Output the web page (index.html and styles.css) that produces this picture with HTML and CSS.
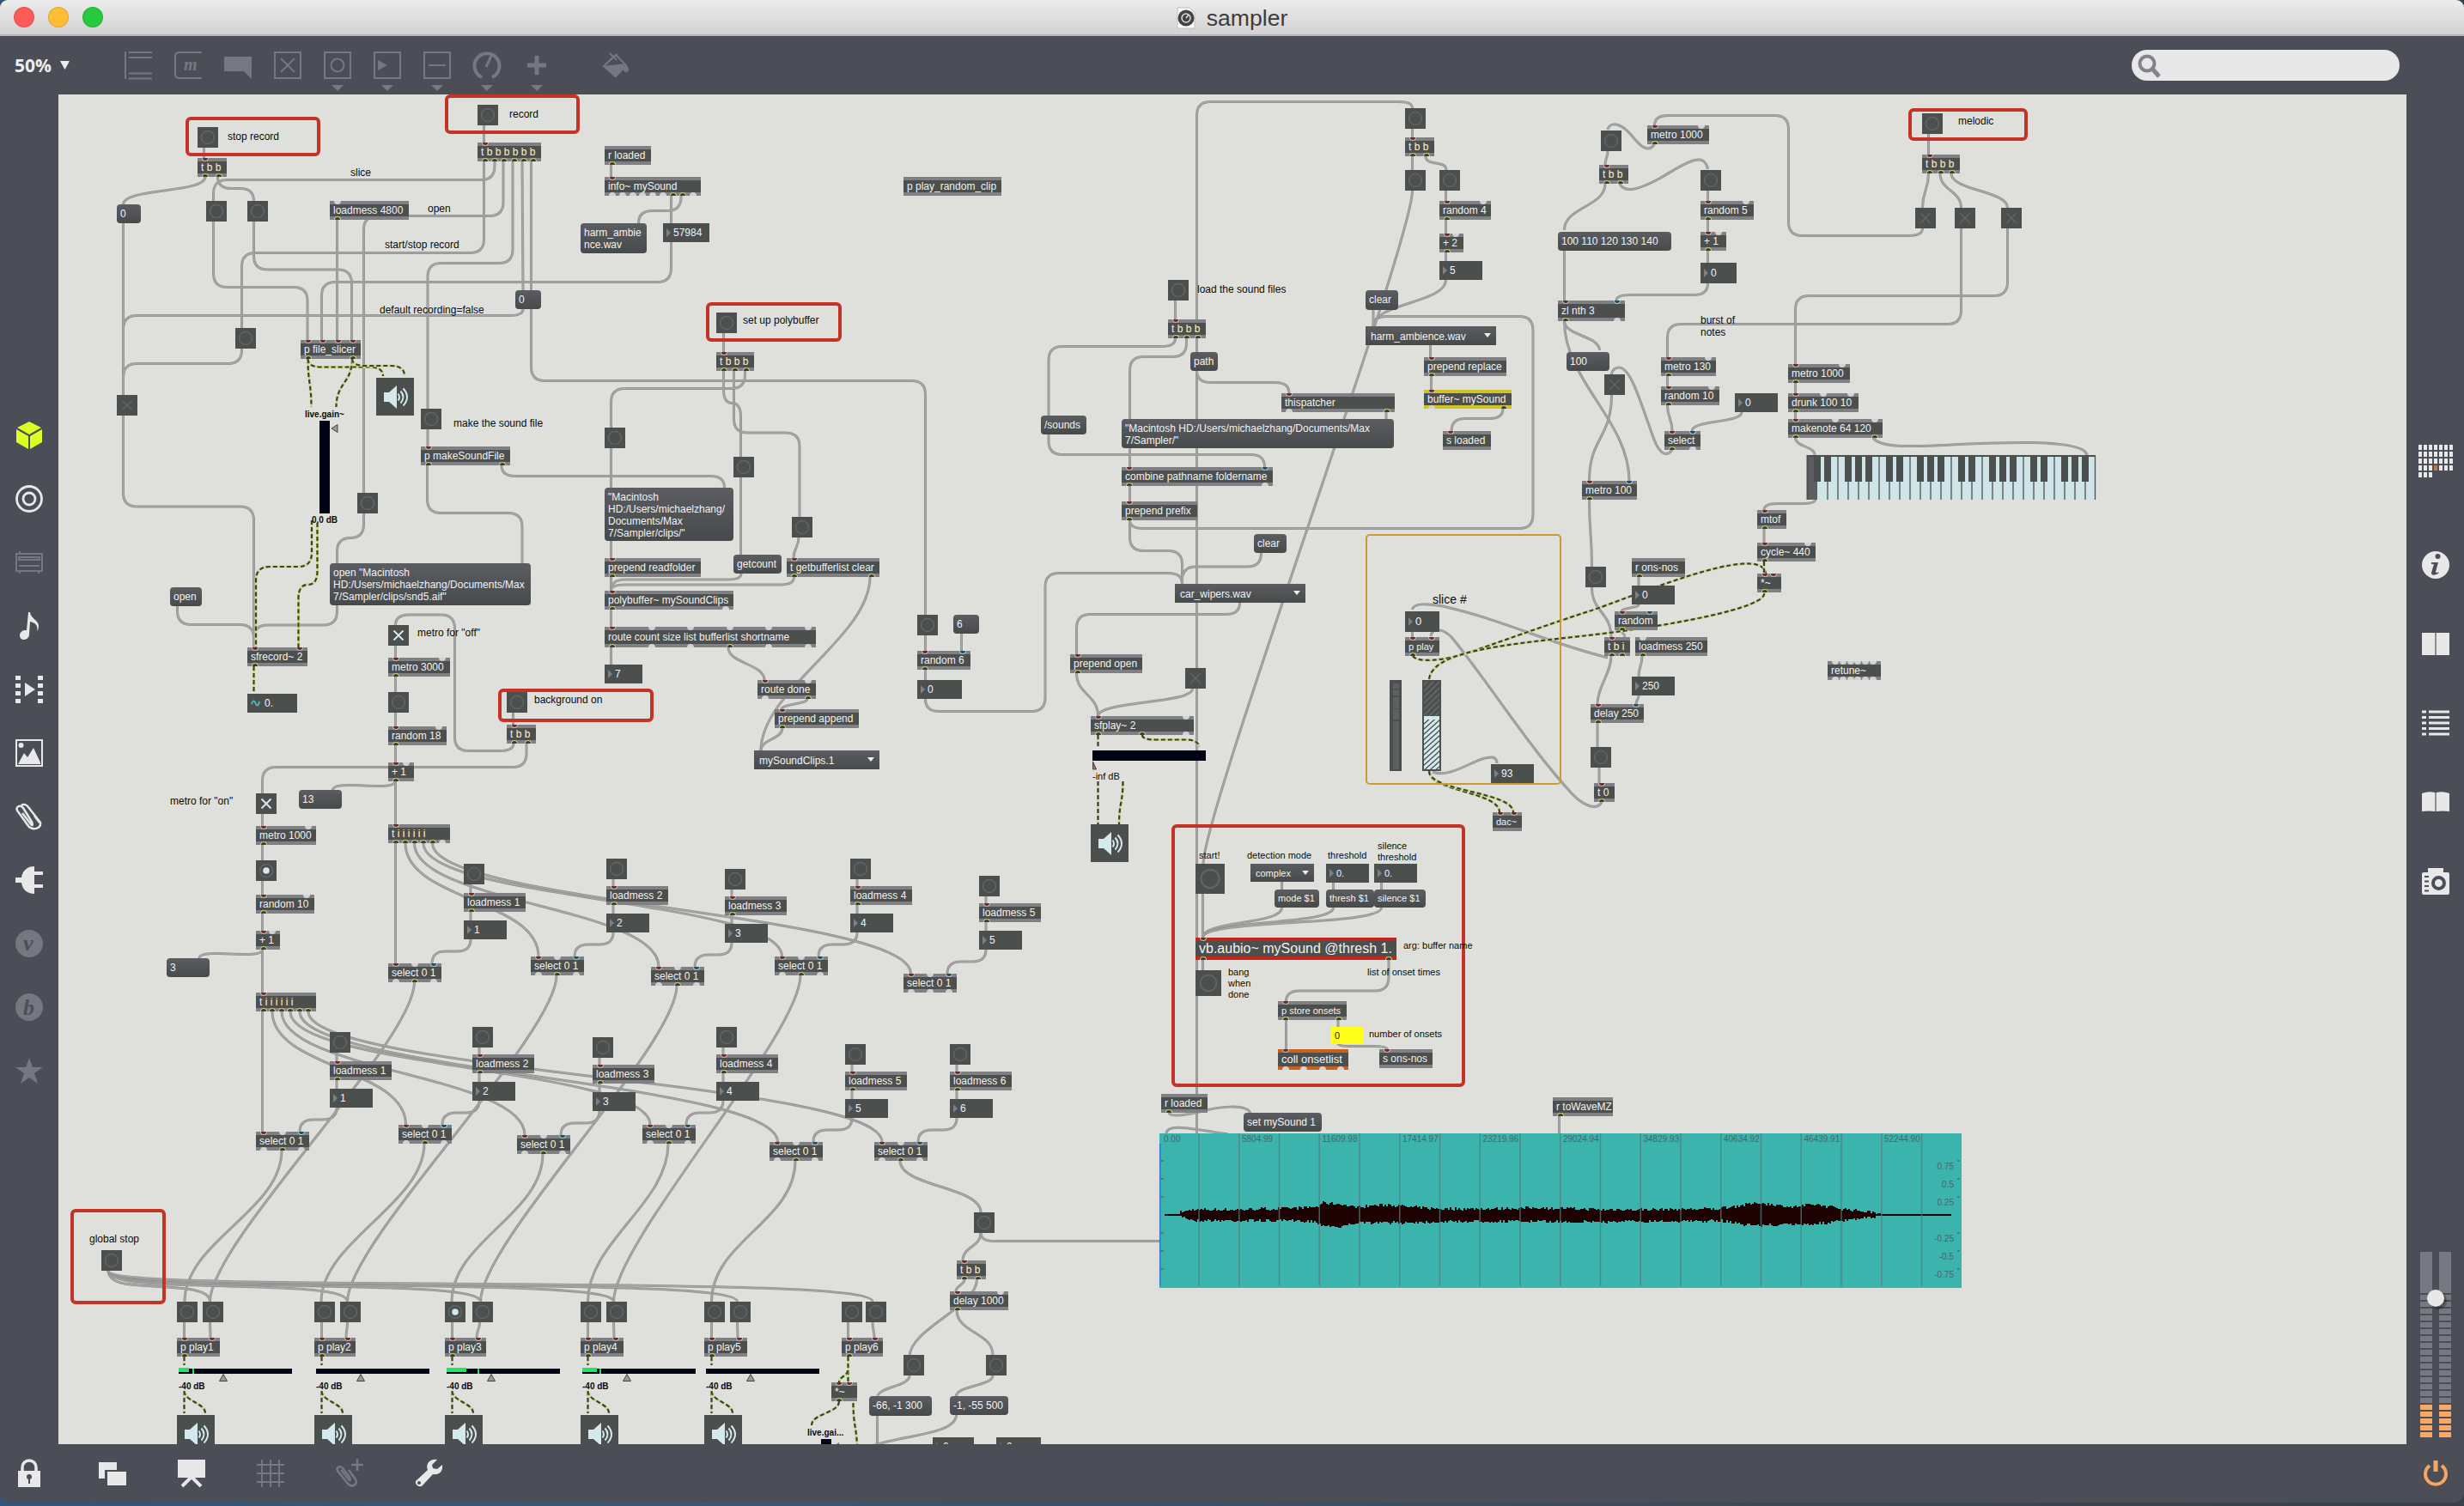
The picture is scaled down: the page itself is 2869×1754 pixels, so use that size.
FILE: index.html
```html
<!DOCTYPE html>
<html lang="en">
<head>
<meta charset="utf-8">
<title>sampler</title>
<link rel="stylesheet" href="styles.css">
</head>
<body>
<div class="window">
  <header class="titlebar">
    <div class="lights"><i class="close"></i><i class="min"></i><i class="max"></i></div>
    <div class="title">
      <svg width="22" height="26" viewBox="0 0 22 26"><path d="M1 1h14l6 6v18H1z" fill="#fff" stroke="#bbb"/><circle cx="11" cy="13" r="9.500" fill="#444"/><circle cx="11" cy="13" r="5" fill="none" stroke="#ddd" stroke-width="1.500"/><path d="M11 13l3-4" stroke="#ddd" stroke-width="1.500"/></svg>
      <span>sampler</span>
    </div>
  </header>

  <div class="toolbar">
    <div class="zoom"><span>50%</span><svg width="11" height="10"><path d="M0 0h11L5.500 10z" fill="#ececec"/></svg></div>
    <svg class="tools" width="600" height="56" viewBox="140 54 600 56" fill="none" stroke="#757881" stroke-width="2">
      <path d="M146 60v32M150 61h27M150 67h27M150 85.500h27M150 91.500h27"/>
      <path d="M235 61h-26q-5 0-5 5v20q0 5 5 5h26"/>
      <text x="214" y="82" class="glyph">m</text>
      <path d="M261 66h32v26l-9-9h-23z" fill="#757881" stroke="none"/>
      <path d="M320 61h30v30h-30zM327 68l16 16M343 68l-16 16"/>
      <path d="M378 61h30v30h-30z"/><circle cx="393" cy="76" r="7.500"/>
      <path d="M436 61h30v30h-30z"/><path d="M440 70l11 6-11 6z" fill="#757881" stroke="none"/>
      <path d="M494 61h30v30h-30zM499 76h20"/>
      <path d="M561 90A14.500 14.500 0 1 1 573 90" stroke-width="4"/><path d="M566 78l6-13" stroke-width="3"/>
      <path d="M625 65v22M614 76h22" stroke-width="5"/>
      <path d="M386 99h14l-7 7zM444 99h14l-7 7zM502 99h14l-7 7zM560 99h14l-7 7zM618 99h14l-7 7z" fill="#757881" stroke="none"/>
      <path d="M703 77l14-13 12 12-12 13z"/><path d="M702 77l27-3-13 16z" fill="#757881" stroke="none"/><path d="M710 62l8 8M719 63l-9 7"/><path d="M729 75q-3 4-3 6 0 3 3 3t3-3q0-2-3-6z" fill="#757881" stroke="none"/>
    </svg>
    <div class="search"><svg width="28" height="30" viewBox="0 0 28 30" fill="none" stroke="#81848c" stroke-width="4"><circle cx="11" cy="11" r="8.500"/><path d="M17 17l8 9" stroke-width="5"/></svg></div>
  </div>

  <div class="middle">
    <nav class="side left">
      <svg viewBox="0 0 32 32"><path d="M16 0l14 7-14 8L2 7zM1 9l14 8v15L1 24zM31 9l-14 8v15l14-8z" fill="#dcff24"/></svg>
      <svg viewBox="0 0 32 32" fill="none" stroke="#e8e8e8" stroke-width="2.800"><circle cx="16" cy="16" r="14.500"/><circle cx="16" cy="16" r="7"/></svg>
      <svg viewBox="0 0 32 32" fill="none" stroke="#757881" stroke-width="2"><path d="M1 6h30v20H1zM4 10h24v3H4zM4 20h24M5 29v-3M27 29v-3M5 6V3"/></svg>
      <svg viewBox="0 0 32 32"><path d="M15 0h2c1 8 10 9 10 16 0 3-1 5-2 6 2-7-3-10-8-11l-1 15c0 3-3 6-6 6s-5-2-5-5 3-6 6-6h2z" fill="#e8e8e8"/></svg>
      <svg viewBox="0 0 32 32"><path d="M0 0h6v5H0zM0 9h6v5H0zM0 18h6v5H0zM0 27h6v5H0zM26 0h6v5h-6zM26 9h6v5h-6zM26 18h6v5h-6zM26 27h6v5h-6zM11 8l12 8-12 8z" fill="#e8e8e8"/></svg>
      <svg viewBox="0 0 32 32"><path d="M1 1h30v30H1z" fill="none" stroke="#e8e8e8" stroke-width="2"/><circle cx="6.500" cy="7" r="3" fill="#e8e8e8"/><path d="M3 29l7-13 4 5 7-11 8 17v2z" fill="#e8e8e8"/></svg>
      <svg viewBox="0 0 32 32" fill="none" stroke="#e8e8e8" stroke-width="2.500"><path d="M8 12l10 13q3 3 1-3L9 6C6 2 0 4 2 9l13 18c5 6 15 3 14-4L15 5C13 2 9 1 7 3M22 15l6 8"/></svg>
      <svg viewBox="0 0 32 32"><path d="M22 0v32C14 32 8 27 7 19H0v-6h7C8 5 14 0 22 0zM22 6h10v4H22zM22 21h10v4H22z" fill="#e8e8e8"/></svg>
      <svg viewBox="0 0 32 32"><circle cx="16" cy="16" r="16" fill="#757881"/><text x="9" y="24" class="serif">v</text></svg>
      <svg viewBox="0 0 32 32"><circle cx="16" cy="16" r="16" fill="#757881"/><text x="9" y="25" class="serif">b</text></svg>
      <svg viewBox="0 0 32 32"><path d="M16 1l4 11h12l-10 7 4 12-10-7-10 7 4-12L0 12h12z" fill="#757881"/></svg>
    </nav>

    <main class="patcher" id="patcher"></main>

    <aside class="side right">
      <div class="calendar" id="calendar"></div>
      <svg viewBox="0 0 32 32"><circle cx="16" cy="16" r="16" fill="#e8e8e8"/><circle cx="18.500" cy="6" r="3" fill="#4b4e57"/><path d="M11 13h8l-3 11q1 2 4 0l-1 2q-8 4-8-1l3-10h-3z" fill="#4b4e57"/></svg>
      <svg viewBox="0 0 32 32"><path d="M0 3h15v26H0zM17 3h15v26H17z" fill="#e8e8e8"/><path d="M16 3v26" stroke="#8b8d93" stroke-width="2"/></svg>
      <svg viewBox="0 0 32 32" stroke="#e8e8e8" stroke-width="3"><path d="M0 3h5M8 3h24M0 9.500h5M8 9.500h24M0 16h5M8 16h24M0 22.500h5M8 22.500h24M0 29h5M8 29h24"/></svg>
      <svg viewBox="0 0 32 32"><path d="M0 6q8-3 15-1v22q-7-1-15 0zM32 6q-8-3-15-1v22q7-1 15 0z" fill="#e8e8e8"/><path d="M16 5v22" stroke="#8b8d93" stroke-width="2"/></svg>
      <svg viewBox="0 0 32 32"><path d="M2 6h5V1h18v5h5q2 0 2 2v22q0 2-2 2H2q-2 0-2-2V8q0-2 2-2z" fill="#e8e8e8"/><circle cx="19.500" cy="18.500" r="6.500" fill="none" stroke="#4b4e57" stroke-width="4"/><path d="M3 11h5M3 16.500h5M3 22h5M3 27.500h5" stroke="#4b4e57" stroke-width="2"/></svg>
      <div class="meters"><div class="meter"></div><div class="meter"></div><i class="knob"></i></div>
    </aside>
  </div>

  <footer class="bottombar">
    <svg class="actions" width="520" height="40" viewBox="0 1696 520 40">
      <path d="M21 1713h26v19H21z" fill="#e8e8e8"/><path d="M26 1714v-5a8 8 0 0 1 16 0v5" fill="none" stroke="#e8e8e8" stroke-width="3.500"/><circle cx="34" cy="1720" r="3" fill="#4b4e57"/><path d="M34 1720v8" stroke="#4b4e57" stroke-width="2"/>
      <path d="M115 1703h21v9h-14v10h-7zM125 1714h22v16h-22z" fill="#e8e8e8"/>
      <path d="M207 1700h32v21h-32z" fill="#e8e8e8"/><path d="M212 1731l11-11 11 11" fill="none" stroke="#e8e8e8" stroke-width="4"/>
      <path d="M305 1700v32M315 1700v32M325 1700v32M299 1706h32M299 1716h32M299 1726h32" stroke="#757881" stroke-width="2"/>
      <path d="M397 1712l9 11q3 3 1-3l-8-10c-3-4-8-1-6 3l12 15c5 5 12 1 9-5l-8-11M416 1699v14M409 1706h14" fill="none" stroke="#757881" stroke-width="2.500"/>
      <path d="M509 1700l-6 6 1 4 5 1 6-5c1 9-5 12-11 11l-12 13c-3 3-9 0-8-5l14-13c-3-7 3-14 11-12z" fill="#e8e8e8"/><circle cx="488" cy="1727" r="2" fill="#4b4e57"/>
    </svg>
    <svg class="power" width="40" height="40" viewBox="-20 -20 40 40" fill="none" stroke="#f7a562" stroke-width="4"><path d="M-7-9A12 12 0 1 0 7-9" /><path d="M0-15V-2" stroke-width="5"/></svg>
  </footer>
</div>
<script src="patch.js"></script>
</body>
</html>
```
FILE: styles.css
```css
* { box-sizing: border-box; }
body { margin: 0; background: linear-gradient(90deg, #31557f, #3c5672 30%, #3a3f48); font-family: "Liberation Sans", Arial, sans-serif; }
.window { width: 2869px; height: 1750px; display: flex; flex-direction: column; background: #4b4e57; border-radius: 9px 9px 12px 12px; overflow: hidden; }

.titlebar { height: 42px; flex: none; display: flex; align-items: center; position: relative; background: linear-gradient(#ececec, #d2d2d2); border-bottom: 2px solid #b4b4b4; }
.lights { display: flex; gap: 16px; padding-left: 16px; }
.lights i { width: 24px; height: 24px; border-radius: 50%; border: 1px solid rgba(0,0,0,.12); }
.close { background: #fc5b57; }
.min { background: #fdbe33; }
.max { background: #27c93f; }
.title { position: absolute; inset: 0; display: flex; align-items: center; justify-content: center; gap: 13px; padding-top: 2px; font-size: 26.600px; color: #3c3c3c; }

.toolbar { height: 68px; flex: none; display: flex; align-items: center; padding-left: 17px; }
.zoom { width: 123px; display: flex; align-items: center; gap: 10px; font: bold 21px "Open Sans", sans-serif; color: #ececec; }
.tools { flex: none; align-self: flex-end; }
.glyph { font: italic bold 20px "Liberation Serif", serif; fill: #757881; stroke: none; }
.search { margin-left: auto; margin-right: 75px; width: 312px; height: 36px; border-radius: 18px; background: #e8e8e8; padding: 5px 0 0 7px; }

.middle { height: 1572px; flex: none; display: flex; }
.side { display: flex; flex-direction: column; align-items: center; flex: none; }
.side > svg { width: 32px; height: 32px; flex: none; }
.left { width: 68px; gap: 42px; padding-top: 381px; }
.right { width: 67px; gap: 60px; padding-top: 408px; }
.serif { font: italic bold 26px "Liberation Serif", serif; fill: #4b4e57; }
.calendar { width: 40px; height: 64px; display: grid; grid-template-columns: repeat(7, 4px); grid-auto-rows: 6px; align-content: start; gap: 2px; }
.calendar i { background: #e8e8e8; }
.calendar i.today { background: #c97830; }
.meters { position: relative; display: flex; gap: 8px; margin-top: 356px; }
.meter { width: 14px; height: 216px; background: linear-gradient(#767982 48px, transparent 48px), repeating-linear-gradient(#4b4e57 0 2px, transparent 2px 8px), linear-gradient(#767982 176px, #f9a866 176px); background-size: 100% 48px, auto, auto; background-repeat: no-repeat, repeat, no-repeat; }
.knob { position: absolute; left: 8px; top: 44px; width: 20px; height: 20px; border-radius: 50%; background: #e8e8e8; box-shadow: 3px 3px 2px rgba(0,0,0,.35); }

.bottombar { height: 68px; flex: none; display: flex; justify-content: space-between; align-items: center; padding-right: 13px; }

.patcher { width: 2734px; position: relative; overflow: hidden; background: #dfe0db; }
.cords { position: absolute; left: -68px; top: -110px; }
.cords path { fill: none; }
.cord-edge { stroke: #919191; stroke-width: 3; }
.cord-core { stroke: #a8a8a7; stroke-width: 1.400; }
.sig-edge { stroke: #ccdb92; stroke-width: 3; }
.sig-core { stroke: #3f412f; stroke-width: 2.200; stroke-dasharray: 5 3; }

.node { position: absolute; font-size: 12px; line-height: 14px; color: #f1f3f4; white-space: pre; }
.object { display: flex; flex-direction: column; justify-content: space-between; background: #4b4f4d; }
.object .label { padding-left: 4px; }
.ports { height: 4px; flex: none; display: flex; justify-content: space-between; padding: 0 5px; background: #7f7f84; }
.ports.solo { justify-content: flex-start; }
.ports i { width: 8px; height: 4px; }
.ins i { border-radius: 0 0 4px 4px; }
.outs i { border-radius: 4px 4px 0 0; }
.ports .idle { background: #d3d3d6; }
.ins .hot { background: #5c3233; border: 1px solid #d6b5ae; border-top: 0; }
.ins .cold { background: #2f4a58; border: 1px solid #9fd0dc; border-top: 0; }
.outs .live { background: #3c3f2c; border: 1px solid #c5cf80; border-bottom: 0; }
.yellow .ports { background: #cfc31f; }
.red .ports { background: #c1251b; }
.orange .ports { background: #c9611c; }
.message { padding: 4px; background: linear-gradient(#5b5d61, #474a4a); border-radius: 4px; }
.number { background: #4b4f4d; display: flex; align-items: center; gap: 3px; padding-left: 4px; }
.number::before { content: ""; border-left: 5px solid #7c7f84; border-top: 5px solid transparent; border-bottom: 5px solid transparent; }
.signalnum { background: #4b4f4d; display: flex; align-items: center; gap: 5px; padding-left: 4px; }
.flag { background: #ffff17; color: #222; padding: 3px 4px; font-size: 11px; }
.menu { background: linear-gradient(#5b5d61, #474a4a); display: flex; align-items: center; justify-content: space-between; padding: 1px 6px 0; }
.menu::after { content: ""; border-top: 5px solid #eee; border-left: 4px solid transparent; border-right: 4px solid transparent; margin-bottom: 2px; }
.bang, .toggle, .speaker { background: #4b4f4d; }
.bang svg, .toggle svg, .speaker svg { display: block; width: 100%; height: 100%; fill: none; stroke: #616567; stroke-width: 1.500; }
.toggle.on svg { stroke: #d3e9ee; stroke-width: 2; }
.lit circle + circle { fill: #d3e9ee; stroke: none; }
.speaker svg { stroke: #d3e9ee; stroke-width: 2; }
.comment { color: #0a0a0a; }
.s10 { font-size: 10px; font-weight: bold; }
.s11 { font-size: 11px; line-height: 13px; }
.s13 { font-size: 13px; }
.s14 { font-size: 14px; }
.s16 { font-size: 16px; line-height: 18px; }
.panel { border: 4px solid #c33427; border-radius: 6px; }
.panel.thin { border: 2px solid #cb9a33; border-radius: 5px; }
.bar { background: #000314; }
.bar i { position: absolute; left: 0; top: -1px; height: 5px; background: #1fe560; }
.bar i + i { width: 2px; top: 0; height: 6px; }
.art { position: absolute; left: -68px; top: -110px; }
.ruler { font-size: 10px; fill: #4b6463; }
```
FILE: patch.js
```javascript
const patcher = document.getElementById('patcher');
const OX = 68, OY = 110;

/* ---- cords ---- */
function rounded(x, y, steps) {
  const pts = [[x, y]];
  steps.forEach((s, i) => {
    const last = pts[pts.length - 1];
    pts.push(i % 2 ? [s, last[1]] : [last[0], s]);
  });
  let d = `M${x} ${y}`;
  for (let i = 1; i < pts.length - 1; i++) {
    const [a, b, c] = [pts[i - 1], pts[i], pts[i + 1]];
    const l1 = Math.hypot(b[0] - a[0], b[1] - a[1]) / (i === 1 ? 1 : 2);
    const l2 = Math.hypot(c[0] - b[0], c[1] - b[1]) / (i === pts.length - 2 ? 1 : 2);
    const r1 = Math.min(16, l1), r2 = Math.min(16, l2);
    const u = [Math.sign(b[0] - a[0]), Math.sign(b[1] - a[1])];
    const v = [Math.sign(c[0] - b[0]), Math.sign(c[1] - b[1])];
    d += `L${b[0] - u[0] * r1} ${b[1] - u[1] * r1}Q${b[0]} ${b[1]} ${b[0] + v[0] * r2} ${b[1] + v[1] * r2}`;
  }
  const e = pts[pts.length - 1];
  return d + `L${e[0]} ${e[1]}`;
}
function curve(x1, y1, x2, y2, k) {
  if (k === undefined) k = Math.min(Math.abs(y2 - y1) / 2, 70);
  return `M${x1} ${y1}C${x1} ${y1 + k} ${x2} ${y2 - k} ${x2} ${y2}`;
}
const cords = [], signals = [];
const R = (x, y, ...s) => cords.push(rounded(x, y, s));
const C = (...a) => cords.push(curve(...a));
const P = d => cords.push(d);
const SR = (x, y, ...s) => signals.push(rounded(x, y, s));
const SC = (...a) => signals.push(curve(...a));
const SP = d => signals.push(d);

/* ---- nodes: kind|x|y|w|h|text|inlets|outlets|classes ---- */
const nodes = [];
const N = s => nodes.push(...s.trim().split('\n'));

N(`
panel|216|136|157|46
panel|518|110|157|46
panel|822|352|158|46
panel|580|802|181|39
panel|82|1408|111|111
panel|2222|126|139|38
panel|1364|960|342|306
panel|1590|622|228|292||||thin
bang|230|148
obj|230|184|34|22|t b b|r|yy
bang|556|122
obj|556|166|74|22|t b b b b b b|r|yyyyyy
msg|136|238|28|22|0
bang|240|234
bang|288|234
obj|384|234|92|22|loadmess 4800|.|y
msg|600|338|30|22|0
bang|274|382
obj|350|396|70|22|p file_slicer|rrrr|yy
speaker|438|440|44|44
bar|372|490|12|108
toggle|136|460
bang|490|476
obj|490|520|104|22|p makeSoundFile|r|yy
bang|416|574
obj|704|170|54|22|r loaded||y
obj|704|206|112|22|info~ mySound|r|......yy.
msg|676|260|77|35|harm_ambie\\nnce.wav
num|772|260|54|22|57984
obj|1052|206|114|22|p play_random_clip
bang|834|364
obj|834|410|44|22|t b b b|r|yyy
bang|704|498
bang|854|532
msg|704|568|150|62|"Macintosh\\nHD:/Users/michaelzhang/\\nDocuments/Max\\n7/Sampler/clips/"
obj|704|650|112|22|prepend readfolder|r|y
msg|854|646|56|22|getcount
obj|916|650|108|22|t getbufferlist clear|r|yy
bang|922|602
obj|704|688|150|22|polybuffer~ mySoundClips|r|y.
obj|704|730|246|24|route count size list bufferlist shortname|r.....|y..y..
num|704|774|44|22|7
bang|590|806
obj|590|844|34|22|t b b|r|yy
obj|882|792|68|22|route done|r.|.y
obj|902|826|98|22|prepend append|r|y
menu|878|874|146|22|mySoundClips.1
bang|1068|716
msg|1110|716|30|22|6
obj|1068|758|62|22|random 6|rb|y
num|1068|792|52|22|0
msg|198|684|37|22|open
msg|384|656|234|49|open "Macintosh\\nHD:/Users/michaelzhang/Documents/Max\\n7/Sampler/clips/snd5.aif"
obj|288|754|70|22|sfrecord~ 2|rr|y
sig|288|808|58|22|0.
toggle|452|728|||||||on
obj|452|766|72|22|metro 3000|r.|y
bang|452|806
obj|452|846|68|22|random 18|r.|y
obj|452|888|30|22|+ 1|r.|y
msg|348|920|50|22|13
toggle|298|924|||||||on
obj|298|962|70|22|metro 1000|r.|y
bang|298|1002|||||||lit
obj|298|1042|68|22|random 10|r.|y
obj|298|1084|28|22|+ 1|r.|y
msg|194|1116|50|22|3
obj|452|960|72|22|t i i i i i i|r|yyyyy.
obj|298|1156|70|22|t i i i i i i|r|yyyyyy
bang|118|1456
bang|1134|1412
obj|1114|1468|34|22|t b b|r|yy
obj|1106|1504|68|22|delay 1000|r.|y
bang|1052|1578
bang|1148|1578
msg|1012|1626|73|23|-66, -1 300
msg|1106|1626|68|22|-1, -55 500
obj|968|1610|30|22|*~|rr|y
num|1086|1674|48|22|0
num|1160|1674|52|22|0
bar|956|1676|12|20
bang|1636|126
obj|1636|160|34|22|t b b|r|yy
bang|1636|198
bang|1676|198
obj|1676|234|60|22|random 4|r.|y
obj|1676|272|28|22|+ 2|r.|y
num|1676|304|50|22|5
bang|1360|326
obj|1360|372|44|22|t b b b|r|yyy
msg|1590|338|38|23|clear
menu|1590|380|152|22|harm_ambience.wav
msg|1386|410|32|22|path
obj|1658|416|96|22|prepend replace|r|y
obj|1492|458|132|20|thispatcher|r|.y
obj|1658|454|102|22|buffer~ mySound|r|.y|yellow
msg|1306|488|317|34|"Macintosh HD:/Users/michaelzhang/Documents/Max\\n7/Sampler/"
msg|1212|484|53|22|/sounds
obj|1680|502|56|22|s loaded|r|
obj|1306|544|176|22|combine pathname foldername|rb|y.
obj|1306|584|88|22|prepend prefix|r|y
msg|1460|622|38|22|clear
bang|1864|152
obj|1918|146|72|22|metro 1000|r.|y
obj|1862|192|34|22|t b b|r|yy
bang|1980|198
obj|1980|234|62|22|random 5|r.|y
obj|1980|270|30|22|+ 1|r.|y
num|1980|306|42|24|0
msg|1814|270|132|22|100 110 120 130 140
obj|1814|350|78|24|zl nth 3|rb|y.
msg|1824|410|50|22|100
toggle|1868|436
obj|1934|416|64|22|metro 130|r.|y
obj|1934|450|68|22|random 10|r.|y
num|2020|458|50|22|0
obj|1938|502|42|22|select|rb|y.
obj|1842|560|64|22|metro 100|rb|y
obj|2082|424|72|22|metro 1000|r.|y
obj|2082|458|82|22|drunk 100 10|r..|y
obj|2082|488|110|22|makenote 64 120|r..|yy
bang|2238|132
obj|2238|180|44|22|t b b b|r|yyy
toggle|2230|242
toggle|2276|242
toggle|2330|242
obj|2046|594|34|22|mtof|r|y
obj|2046|632|68|22|cycle~ 440|r.|y
obj|2046|668|28|22|*~|rr|y
bang|1846|660
obj|1900|650|62|22|r ons-nos||y
num|1900|682|50|22|0
obj|1880|712|50|22|random|rb|y
obj|1868|742|30|22|t b i|r|yy
obj|1904|742|84|22|loadmess 250|.|y
num|1900|788|50|22|250
obj|1852|820|62|22|delay 250|rb|y
bang|1852|870
obj|1856|912|24|22|t 0|r|y
obj|2128|770|62|22|retune~|......|......
menu|1368|680|152|22|car_wipers.wav
obj|1246|762|84|22|prepend open|r|y
toggle|1380|778
obj|1270|834|120|22|sfplay~ 2|r.|yy.
bar|1272|874|132|12
speaker|1270|960|44|44
num|1636|712|40|24|0|||s13
obj|1636|742|40|22|p play|rr|y|s11
num|1736|890|50|22|93
obj|1738|946|34|22|dac~|rr||s11
bang|1392|1006|34|35
menu|1456|1006|74|21|complex|||s11
num|1544|1006|50|22|0.|||s11
num|1600|1006|50|22|0.|||s11
msg|1484|1036|52|21|mode $1|||s11
msg|1544|1036|56|21|thresh $1|||s11
msg|1600|1036|60|21|silence $1|||s11
obj|1392|1092|234|26|vb.aubio~ mySound @thresh 1.|r|yy|red s16
bang|1392|1130|30|30
obj|1488|1166|80|22|p store onsets|r|yy|s11
flag|1550|1196|38|20|0
obj|1488|1222|82|24|coll onsetlist|r|....|orange s13
obj|1606|1222|62|22|s ons-nos|r|
obj|1352|1274|54|22|r loaded||y
msg|1448|1296|91|22|set mySound 1
obj|1808|1278|70|22|r toWaveMZ||y
txt|265|159|||stop record
txt|593|133|||record
txt|408|201|||slice
txt|498|243|||open
txt|448|285|||start/stop record
txt|442|361|||default recording=false
txt|528|493|||make the sound file
txt|355|483|||live.gain~|||s10
txt|363|606|||0.0 dB|||s10
txt|865|373|||set up polybuffer
txt|622|815|||background on
txt|486|737|||metro for "off"
txt|198|933|||metro for "on"
txt|104|1443|||global stop
txt|940|1669|||live.gai...|||s10
txt|1394|337|||load the sound files
txt|1980|380|||burst of\\nnotes
txt|2280|141|||melodic
txt|1272|904|||-inf dB|||s11
txt|1668|698|||slice #|||s14
txt|1396|996|||start!|||s11
txt|1452|996|||detection mode|||s11
txt|1546|996|||threshold|||s11
txt|1604|992|||silence\\nthreshold|||s11
txt|1634|1101|||arg: buffer name|||s11
txt|1592|1132|||list of onset times|||s11
txt|1430|1145|||bang\\nwhen\\ndone|||s11
txt|1594|1204|||number of onsets|||s11
`);

/* loadmess columns: bang x, bang y, loadmess y, value, select x, select y */
[
  [540, 1006, 1040, 1, 452, 1122], [706, 1000, 1032, 2, 618, 1114], [844, 1012, 1044, 3, 758, 1126],
  [990, 1000, 1032, 4, 902, 1114], [1140, 1020, 1052, 5, 1052, 1134, '...'],
  [384, 1202, 1236, 1, 298, 1318], [550, 1196, 1228, 2, 464, 1310], [690, 1208, 1240, 3, 602, 1322],
  [834, 1196, 1228, 4, 748, 1310], [984, 1216, 1248, 5, 896, 1330], [1106, 1216, 1248, 6, 1018, 1330]
].forEach(([x, by, ly, n, sx, sy, outs]) => {
  N(`bang|${x}|${by}\nobj|${x}|${ly}|72|22|loadmess ${n}|r|y\nnum|${x}|${ly + 32}|50|22|${n}\nobj|${sx}|${sy}|62|22|select 0 1|r.b|${outs || '.y.'}`);
  R(x + 8, by + 24, ly);
  R(x + 8, ly + 22, ly + 32);
  R(x + 8, ly + 54, Math.round((ly + 54 + sy) / 2), sx + 51, sy);
});

/* players: x, second bang x, object width, level, peak */
[[206, 236, 50, 12, 16], [366, 396, 48], [518, 550, 48, 23, 36], [676, 706, 50, 17, 20], [820, 850, 50]].forEach(([x, x2, w, level, peak], i) => {
  N(`bang|${x}|1516|||||||${i === 2 ? 'lit' : ''}\nbang|${x2}|1516\nobj|${x}|1558|${w}|22|p play${i + 1}|rr|y\nbar|${x + 2}|1594|132|6|${level || ''},${peak || ''}\nspeaker|${x}|1648|44|44\ntxt|${x + 2}|1615|||-40 dB|||s10`);
  R(x + 8.5, 1540, 1558);
  C(x2 + 8.5, 1540, x + w - 11, 1558);
  SR(x + 8.5, 1580, 1590);
  SR(x + 8.5, 1620, 1646);
  SC(x + 8.5, 1620, x + 33, 1646, 12);
});
N(`
bang|980|1516
bang|1008|1516
obj|980|1558|48|22|p play6|rr|y
`);
R(987.5, 1540, 1558); C(1016, 1540, 1018, 1558);

R(237.5, 172, 184);
C(239, 206, 143.5, 238, 19);
R(253.5, 206, 219.5, 295.5, 234);
R(576, 188, 209.5, 248.5, 234);
R(563.5, 188, 294.5, 281.5, 382);
R(586, 188, 251.5, 423.5, 574);
R(597, 188, 306.5, 498, 476);
C(608, 188, 609, 338);
R(618.5, 188, 443.5, 1077.5, 716);
R(609, 360, 367.5, 143.5, 460);
R(143.5, 260, 460);
R(143.5, 484, 590, 295.5, 754);
R(248.5, 258, 334.5, 358, 396);
R(295.5, 258, 314, 409.5, 396);
R(781.5, 228, 328.5, 374.5, 396);
R(392.5, 256, 396);
R(281.5, 406, 423.5, 143.5, 460);
R(563.5, 146, 166);
R(498, 500, 520);
R(584, 542, 554.5, 843.5, 568);
R(497.5, 542, 597.5, 608, 656);
R(423.5, 598, 626.5, 392.5, 656);
R(392.5, 705, 728, 295.5, 754);
R(206.5, 706, 727.5, 295.5, 754);
R(711.5, 192, 206);
R(793, 228, 245.5, 743.5, 260);
R(842.5, 388, 410);
R(842.5, 432, 469.5, 862.5, 532);
R(854.5, 432, 504, 931, 602);
R(867.5, 432, 452.5, 711.5, 498);
R(711.5, 522, 568); R(862.5, 556, 646);
R(711.5, 630, 774);
R(863, 668, 675, 711.5, 688);
R(924.5, 672, 681, 711.5, 688);
C(930, 626, 924, 650);
C(1013, 672, 886, 874);
C(848, 754, 890, 792);
C(940, 814, 910, 826);
C(911, 848, 886, 874);
R(1077.5, 740, 792); R(1119.5, 738, 758);
R(1077.5, 814, 828.5, 1217, 667.5, 1376.5, 680);
R(1315.5, 606, 641.5, 1376.5, 680);
R(1315.5, 606, 615.5, 1785, 368.5, 1599, 380);
R(1468.5, 644, 660, 1376.5, 680);
R(460.5, 752, 1122);
R(598, 866, 874.5, 529.5, 716, 460.5, 728);
R(613, 866, 893.5, 305.5, 924);
R(597.5, 830, 844);
C(460, 910, 387.5, 920, 13);
R(305.5, 948, 1318);
C(305.5, 1106, 232, 1116, 13);
C(472, 982, 627, 1114); C(482.5, 982, 767, 1126); C(493, 982, 910.5, 1114); C(503.5, 982, 1060.5, 1134);
C(317, 1178, 472.5, 1310); C(328, 1178, 611, 1322); C(338, 1178, 757, 1310); C(349, 1178, 905.5, 1330); C(359, 1178, 1027, 1330);
C(482.5, 1144, 244.5, 1516); C(648, 1136, 404.5, 1516); C(788, 1148, 559.5, 1516); C(932, 1136, 714.5, 1516);
C(328, 1340, 215, 1516); C(494, 1332, 374, 1516); C(632, 1344, 526, 1516); C(778, 1332, 684.5, 1516); C(926, 1352, 828.5, 1516);
C(1048, 1352, 1142, 1412);
[244.5, 404.5, 559.5, 714.5, 858.5, 1016].forEach((x, i) => {
  const dx = x - 126, mid = 1498.5 - i * .6;
  P(`M126 1480C127 ${mid - 1} ${126 + dx * .25} ${mid - 2} ${126 + dx / 2} ${mid}S${x} ${mid + 3} ${x} 1516`);
});
C(1142, 1436, 1121, 1468);
R(1142, 1436, 1445.5, 1352);
C(1123, 1490, 1113, 1504);
C(1137.5, 1490, 1059, 1580, 32);
C(1114, 1526, 1156, 1578);
C(1059, 1602, 1021.5, 1628); C(1156, 1602, 1113.5, 1626);
R(1021.5, 1649, 1682); C(1113.5, 1648, 1000, 1700, 30);

R(1644.5, 126, 118.5, 1393.5, 1320);
R(1644.5, 150, 160); R(1644.5, 182, 198); C(1660, 182, 1684, 198, 12);
R(1683.5, 222, 304);
C(1683.5, 326, 1599, 380); C(1644.5, 222, 1401, 1006, 60);
R(1599, 361, 380);
R(1393.5, 431, 445.5, 1501, 458);
R(1368.5, 394, 403.5, 1221, 484);
R(1381.5, 394, 415.5, 1315.5, 488);
R(1368.5, 350, 372);
R(1221, 506, 529.5, 1472.5, 544);
R(1614, 478, 488); R(1315.5, 522, 584);
R(1665.5, 402, 416); R(1666.5, 438, 454);
R(1750, 476, 487.5, 1690, 502);

P('M1926.500 168C1915 184 1902 157 1892 150S1874 143 1872 151');
C(1872, 176, 1869, 192);
C(1869, 214, 1821.5, 268);
P('M1886 214C1892 226 1910 220 1932 208S1984 172 1988.500 197');
R(1988.5, 222, 306);
R(1988.5, 330, 343.5, 1882, 350);
R(1821.5, 292, 350);
R(1926.5, 146, 134.5, 2082.5, 274.5, 2238.5, 266);
C(1821.5, 374, 1862.5, 408); C(1821.5, 374, 1897, 560);
C(1876.5, 460, 1850.5, 560);
P('M1947 524C1941 532 1933 530 1926 512C1912 475 1900 428 1885 428C1880 428 1877 432 1876 437');
R(2245.5, 156, 180);
C(2245.5, 202, 2238.5, 242); C(2259, 202, 2283.5, 242); C(2272, 202, 2337.5, 242);
R(2283.5, 266, 377.5, 1941.5, 416);
R(2337.5, 266, 344.5, 2090.5, 424);
R(1941.5, 438, 450); C(1941.5, 472, 1947, 502);
C(2028, 480, 1970, 502, 13);
R(2090.5, 446, 488);
C(2090.5, 510, 2113, 530);
P('M2181 510C2190 522 2225 520 2260 518.500S2426 508 2430 530');
R(2113.5, 582, 586.5, 2054, 594);
R(2054, 616, 632);
C(1850.5, 582, 1853.5, 660);

R(1443.5, 702, 715.5, 1253.5, 762);
C(1253.5, 784, 1278.5, 834); C(1388.5, 802, 1278.5, 834, 18);
R(1644.5, 736, 742);
P('M1644.500 710C1646 702 1660 703 1680 706C1750 722 1800 748 1872 766');
P('M1666 741C1668 730 1680 732 1690 742C1730 790 1780 870 1830 924C1845 940 1860 944 1865 934');
P('M1668 899C1690 908 1720 880 1738 882C1742 883 1743 886 1743 889');
R(1492.5, 1027, 1036); R(1552.5, 1027, 1036); R(1608.5, 1027, 1036);
C(1492.5, 1057, 1400.5, 1092, 20); C(1552.5, 1057, 1400.5, 1092, 21); C(1608.5, 1057, 1400.5, 1092, 22);
R(1400.5, 1041, 1092); R(1400.5, 1118, 1130);
R(1617, 1118, 1154, 1497.5, 1166);
R(1497.5, 1188, 1222); R(1558, 1188, 1196); R(1558, 1216, 1218.5, 1615, 1222);
P('M1361 1296C1363 1302 1385 1298 1400 1294S1452 1284 1456 1297');
P('M1358 1320C1359 1308 1385 1314 1430 1321');
R(1815.5, 1300, 1320);
C(1853.5, 684, 1876, 742); R(1908, 672, 682); C(1908, 704, 1888, 712); C(1888, 734, 1892, 742);
C(1912, 764, 1908, 788); C(1876, 764, 1860, 820, 20); C(1908, 810, 1905, 820); R(1860, 842, 870); R(1862, 894, 912);

SC(358.5, 418, 362.5, 474); SR(358.5, 418, 427.5, 446, 438);
SC(410, 418, 391.5, 474); SR(410, 418, 426, 471, 438);
SR(363, 606, 660, 298, 754); SR(369.5, 609, 681, 347.5, 754);
SR(295.5, 776, 806);
SR(987.5, 1580, 1610); SC(987, 1596, 977, 1610);
SC(977, 1632, 945, 1660); SC(993.5, 1634, 998, 1690);
SR(1278.5, 856, 870); SR(1330, 856, 861.5, 1396, 870);
SR(1278.5, 910, 960); SC(1307.5, 910, 1303, 960);
SP('M1645 764C1650 772 1680 770 1710 760S1800 728 1850 712S2050 630 2056 668');
SP('M1664 791C1668 760 1740 752 1840 741S2060 708 2054 690');
SC(1664, 898, 1746, 946); SC(1664, 898, 1762, 946);
SR(2054, 654, 668);

/* ---- render ---- */
function cordLayer() {
  const both = (list, kind) => list.map(d => `<path class="${kind}-edge" d="${d}"/><path class="${kind}-core" d="${d}"/>`).join('');
  patcher.insertAdjacentHTML('beforeend', `<svg class="cords" width="2869" height="1754">${both(cords, 'cord')}${both(signals, 'sig')}</svg>`);
}
const portName = { r: 'hot', b: 'cold', y: 'live', '.': 'idle' };
const ports = (s, side) => `<div class="ports ${side}${s.length === 1 ? ' solo' : ''}">${[...s].map(c => `<i class="${portName[c]}"></i>`).join('')}</div>`;
const icons = {
  bang: '<svg viewBox="0 0 24 24"><circle cx="12" cy="12" r="7.500"/><circle cx="12" cy="12" r="3.800" class="dot"/></svg>',
  toggle: '<svg viewBox="0 0 24 24"><path d="M6.500 6.500l11 11M17.500 6.500l-11 11"/></svg>',
  speaker: '<svg viewBox="0 0 44 44"><path d="M9 17h6l9-8v27l-9-8H9z" fill="#d3e9ee" stroke="none"/><path d="M25.500 18.500q3 4 0 8M28.500 15.500q6 7 0 14M31.500 12.500q9 10 0 20"/></svg>'
};
const kinds = { obj: 'object', msg: 'message', num: 'number', sig: 'signalnum', txt: 'comment' };

function render(line) {
  let [kind, x, y, w, h, text = '', ins = '', outs = '', extra = ''] = line.split('|');
  const rest = line.split('|').slice(9).join('');
  if (rest) extra = rest;
  x = +x - OX; y = +y - OY;
  const lines = text.split('\\n');
  let html = lines.join('\n');
  if (kind === 'obj') html = ports(ins, 'ins') + `<span class="label">${html}</span>` + ports(outs, 'outs');
  if (icons[kind]) {
    html = icons[kind];
    if (kind === 'bang' && extra !== 'lit') html = html.replace(/<circle[^>]*class="dot"\/>/, '');
    w = w || 24; h = h || 24;
  }
  if (kind === 'sig') html = `<svg width="11" height="8" viewBox="0 0 11 8"><path d="M1 5C2 1 4 0 5.500 4S9 7 10 2" fill="none" stroke="#45c3c6" stroke-width="1.800"/></svg>${text}`;
  if (kind === 'bar') {
    const [level, peak] = text.split(',');
    html = level ? `<i style="width:${level}px"></i><i style="left:${peak}px"></i>` : '';
  }
  if (kind === 'txt') y -= lines.length * (extra === 's11' ? 13 : 14) / 2;
  const size = w ? `width:${w}px;height:${h}px` : '';
  patcher.insertAdjacentHTML('beforeend', `<div class="node ${kinds[kind] || kind} ${extra}" style="left:${x}px;top:${y}px;${size}">${html}</div>`);
}

/* ---- keyboard, waveform, sliders ---- */
function keyboard() {
  let s = '<rect x="2104" y="530" width="336" height="52" fill="#cee4e8"/><rect x="2104" y="530" width="12" height="52" fill="#5d5e63"/><path d="M2104.500 582V531H2440" fill="none" stroke="#4b4f4d" stroke-width="2"/>';
  const gaps = [2, 6, 9, 13, 16, 20, 23, 27];
  for (let k = 0; k <= 27; k++) {
    const x = 2116 + k * 12;
    if (k) s += `<path d="M${x - (k === 27 ? .5 : 0)} 530v52" stroke="#4b4f4d" stroke-width="1.300"/>`;
    if (!gaps.includes(k)) s += `<rect x="${x - 4}" y="530" width="8" height="31" fill="#4b4f4d"/>`;
  }
  return s;
}
function waveform() {
  const up = [[1356, 1], [1371, 1], [1374, 3], [1390, 6], [1447, 6], [1473, 7], [1492, 7], [1530, 9], [1534, 9], [1537, 14], [1559, 13], [1575, 9], [1617, 12], [1640, 9], [1677, 7], [1728, 7], [1798, 8], [1862, 6], [1913, 6], [1996, 7], [2028, 11], [2047, 14], [2085, 9], [2114, 12], [2143, 7], [2162, 5], [2187, 2.5], [2194, 1], [2272, 1]];
  const down = [[1356, 1], [1371, 1], [1390, 6], [1530, 7], [1536, 11], [1562, 14], [1575, 9], [1626, 9], [1660, 8], [1728, 7], [1881, 8], [1913, 7], [2009, 7], [2031, 11], [2050, 12], [2117, 10], [2143, 7], [2175, 3], [2190, 1], [2272, 1]];
  const at = (t, x) => {
    let i = 0;
    while (i < t.length - 2 && t[i + 1][0] < x) i++;
    const [a, b] = [t[i], t[i + 1]];
    return a[1] + (b[1] - a[1]) * (x - a[0]) / (b[0] - a[0]);
  };
  let seed = 7;
  const rnd = () => (seed = (seed * 16807) % 2147483647) / 2147483647;
  const top = [], bottom = [];
  for (let x = 1356; x < 2272; x += 2) {
    const jitter = a => a <= 1.3 ? 1 : Math.max(1, Math.round(a + (rnd() - .45) * 3.6));
    top.push(`L${x} ${1415 - jitter(at(up, x))}h2`);
    const b = 1415 + jitter(at(down, x));
    bottom.unshift(`L${x + 2} ${b}h-2`);
  }
  let s = '<rect x="1350" y="1320" width="934" height="180" fill="#3bb4ae"/>';
  s += `<path d="M1356 1415${top.join('')}${bottom.join('')}Z" fill="#1e0202"/>`;
  for (let k = 0; k < 19; k++) s += `<path d="M${1396 + k * 46.75} 1320v178" stroke="#557d7b" stroke-width="1.500" opacity=".75"/>`;
  ['0.00', '5804.99', '11609.98', '17414.97', '23219.96', '29024.94', '34829.93', '40634.92', '46439.91', '52244.90'].forEach((t, i) => {
    s += `<text class="ruler" x="${i ? 1352.500 + i * 93.5 : 1355}" y="1329.500">${t}</text>`;
  });
  [['0.75', 1358], ['0.5', 1379], ['0.25', 1400], ['-0.25', 1442], ['-0.5', 1463], ['-0.75', 1484]].forEach(([t, y]) => {
    s += `<text class="ruler" text-anchor="end" x="2275" y="${y + 3.5}">${t}</text><path d="M2279 ${y - 6}h3M1351 ${y - 6}h4" stroke="#4b7c7e" stroke-width="2"/>`;
  });
  return s + '<path d="M1350.700 1332v166" stroke="#2a7ccf" stroke-width="1.500"/>';
}
function sliders() {
  let s = '<rect x="1618" y="792" width="14" height="106" fill="#4b4f4d"/><path d="M1625.500 796v6M1625.500 803.500v6.500M1625.500 812v13M1625.500 826v12M1625.500 840v56" stroke="#5f6064" stroke-width="7"/>';
  s += '<clipPath id="shaft"><rect x="1658" y="794" width="18" height="102"/></clipPath><rect x="1656" y="792" width="22" height="106" fill="#4b4f4d"/><g clip-path="url(#shaft)">';
  for (let y = 800; y < 856; y += 7) s += `<path d="M1656 ${y}l22-22" stroke="#686c6c" stroke-width="1.500"/>`;
  s += '<rect x="1658" y="834" width="18" height="62" fill="#d3e9ee"/>';
  for (let y = 845; y < 920; y += 6) s += `<path d="M1656 ${y}l22-20" stroke="#4b4f4d" stroke-width="1.300"/>`;
  s += '<rect x="1658" y="834" width="18" height="4" fill="#d3e9ee"/></g>';
  [260, 420, 572, 730, 874].forEach(x => { s += `<path d="M${x} 1600.500l4.500 8h-9z" fill="#9a9a98" stroke="#444" stroke-width="1"/>`; });
  s += '<path d="M386 499l7-4.500v9z" fill="#9a9a98" stroke="#444" stroke-width="1"/><path d="M1272.500 887l4 9h-4z" fill="#b56a5a" stroke="#444" stroke-width="1"/><path d="M971 1684l6-4v8z" fill="#666"/>';
  return s;
}

cordLayer();
nodes.forEach(render);
patcher.insertAdjacentHTML('beforeend', `<svg class="art" width="2869" height="1754">${keyboard()}${waveform()}${sliders()}</svg>`);

document.getElementById('calendar').innerHTML = Array.from({ length: 31 }, (_, i) => `<i class="${i === 24 ? 'today' : ''}"></i>`).join('');
```
